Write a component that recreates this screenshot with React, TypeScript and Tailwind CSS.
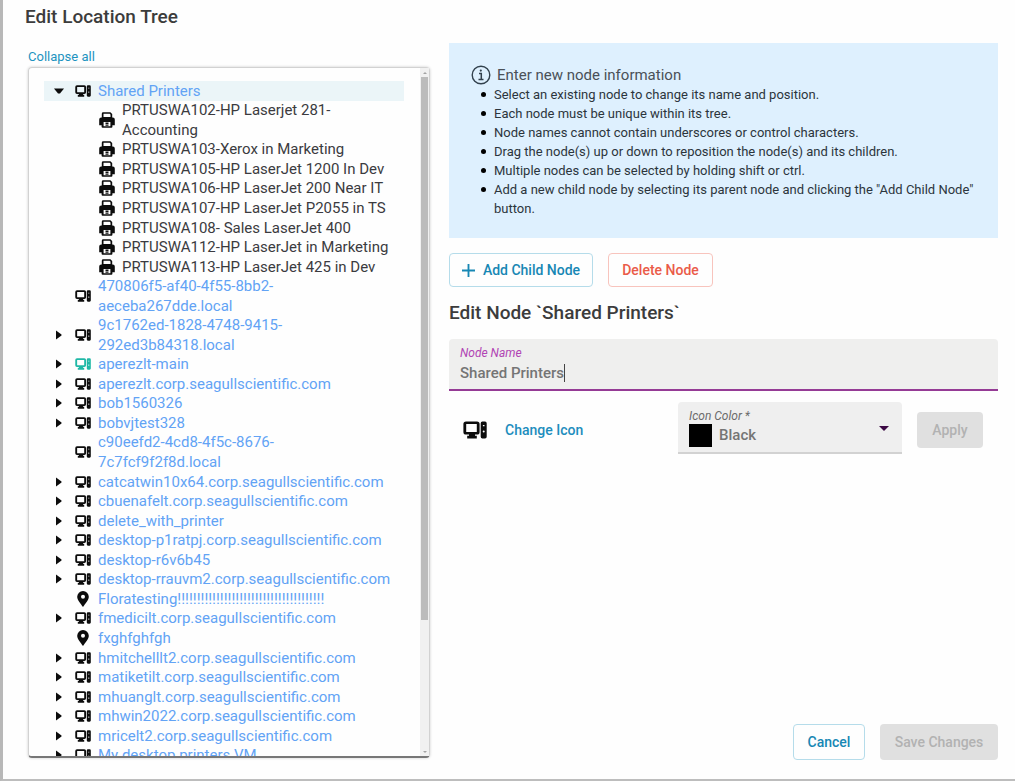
import { useState } from "react";

type IconKind = "computer" | "printer" | "pin";

interface TreeNode {
  name: string;
  icon: IconKind;
  level: 1 | 2;
  expanded?: boolean;
  tall?: boolean;
  teal?: boolean;
}

const host = (name: string, tall = false): TreeNode => ({ name, icon: "computer", level: 1, expanded: false, tall });
const leaf = (name: string, icon: IconKind, tall = false): TreeNode => ({ name, icon, level: 1, tall });
const printer = (name: string, tall = false): TreeNode => ({ name, icon: "printer", level: 2, tall });

const nodes: TreeNode[] = [
  { name: "Shared Printers", icon: "computer", level: 1, expanded: true },
  printer("PRTUSWA102-HP Laserjet 281-Accounting", true),
  printer("PRTUSWA103-Xerox in Marketing"),
  printer("PRTUSWA105-HP LaserJet 1200 In Dev"),
  printer("PRTUSWA106-HP LaserJet 200 Near IT"),
  printer("PRTUSWA107-HP LaserJet P2055 in TS"),
  printer("PRTUSWA108- Sales LaserJet 400"),
  printer("PRTUSWA112-HP LaserJet in Marketing"),
  printer("PRTUSWA113-HP LaserJet 425 in Dev"),
  leaf("470806f5-af40-4f55-8bb2-aeceba267dde.local", "computer", true),
  host("9c1762ed-1828-4748-9415-292ed3b84318.local", true),
  { ...host("aperezlt-main"), teal: true },
  host("aperezlt.corp.seagullscientific.com"),
  host("bob1560326"),
  host("bobvjtest328"),
  leaf("c90eefd2-4cd8-4f5c-8676-7c7fcf9f2f8d.local", "computer", true),
  host("catcatwin10x64.corp.seagullscientific.com"),
  host("cbuenafelt.corp.seagullscientific.com"),
  host("delete_with_printer"),
  host("desktop-p1ratpj.corp.seagullscientific.com"),
  host("desktop-r6v6b45"),
  host("desktop-rrauvm2.corp.seagullscientific.com"),
  leaf("Floratesting!!!!!!!!!!!!!!!!!!!!!!!!!!!!!!!!!!!!!!", "pin"),
  host("fmedicilt.corp.seagullscientific.com"),
  leaf("fxghfghfgh", "pin"),
  host("hmitchelllt2.corp.seagullscientific.com"),
  host("matiketilt.corp.seagullscientific.com"),
  host("mhuanglt.corp.seagullscientific.com"),
  host("mhwin2022.corp.seagullscientific.com"),
  host("mricelt2.corp.seagullscientific.com"),
  host("My desktop printers VM"),
];

const tips = [
  "Select an existing node to change its name and position.",
  "Each node must be unique within its tree.",
  "Node names cannot contain underscores or control characters.",
  "Drag the node(s) up or down to reposition the node(s) and its children.",
  "Multiple nodes can be selected by holding shift or ctrl.",
  'Add a new child node by selecting its parent node and clicking the "Add Child Node" button.',
];

function ComputerIcon({ className }: { className: string }) {
  return (
    <svg viewBox="0 0 24 18" className={className} fill="currentColor" aria-hidden="true">
      <path
        fillRule="evenodd"
        d="M3 .5h11a2.600 2.600 0 0 1 2.600 2.600v7.800A2.600 2.600 0 0 1 14 13.500h-2v1.300h1.800V17.500H4.200v-2.700H6V13.500H3A2.600 2.600 0 0 1 .4 10.900V3.100A2.600 2.600 0 0 1 3 .5Zm.2 2.500v8h10.600V3Z"
      />
      <path
        fillRule="evenodd"
        d="M19.400 .5h2.600A1.700 1.700 0 0 1 23.700 2.200v13.600A1.700 1.700 0 0 1 22 17.500h-2.600a1.700 1.700 0 0 1-1.700-1.700V2.200A1.700 1.700 0 0 1 19.400 .5Zm.5 3.500v1.300h1.600V4Zm.8 5.600a1 1 0 1 0 0 2 1 1 0 0 0 0-2Z"
      />
    </svg>
  );
}

function PrinterIcon({ className }: { className: string }) {
  return (
    <svg viewBox="0 0 16 16" className={className} fill="currentColor" aria-hidden="true">
      <path
        fillRule="evenodd"
        d="M4.200 .3h7.200L13.200 2V5.500h.6A2 2 0 0 1 15.800 7.500v5.700h-2.400v1.500a1 1 0 0 1-1 1H3.600a1 1 0 0 1-1-1V13.200H.2V7.500a2 2 0 0 1 2-2H2.800V1.700A1.400 1.400 0 0 1 4.200 .3Zm.3 1.500V5h7V2.600l-.8-.8ZM4.600 10v4.300h6.800V10Z"
      />
      <path d="M6.500 10.600h3v1.300h-3zM6.500 12.500h3v1.200h-3z" />
    </svg>
  );
}

function PinIcon({ className }: { className: string }) {
  return (
    <svg viewBox="0 0 12 16" className={className} fill="currentColor" aria-hidden="true">
      <path fillRule="evenodd" d="M6 0a5.800 5.800 0 0 1 5.800 5.800C11.800 9 8.500 12.500 6 16 3.500 12.500.2 9 .2 5.800A5.800 5.800 0 0 1 6 0Zm0 3.700a2 2 0 1 0 0 4 2 2 0 0 0 0-4Z" />
    </svg>
  );
}

function NodeIcon({ node }: { node: TreeNode }) {
  if (node.icon === "printer") return <PrinterIcon className="size-4" />;
  if (node.icon === "pin") return <PinIcon className="h-4 w-3" />;
  return <ComputerIcon className={node.teal ? "h-3 w-4 text-[#1fb8a6]" : "h-3 w-4"} />;
}

function Caret({ expanded }: { expanded: boolean }) {
  return (
    <svg viewBox="0 0 10 10" className="size-[10px]" fill="currentColor" aria-hidden="true">
      {expanded ? <path d="M0 2.500h10L6 7.500H4Z" /> : <path d="M2 .5L7.500 4.400v1.200L2 9.500Z" />}
    </svg>
  );
}

function TreeRow({ node, selected, onSelect }: { node: TreeNode; selected: boolean; onSelect: () => void }) {
  return (
    <li
      role="treeitem"
      aria-level={node.level}
      aria-expanded={node.expanded}
      aria-selected={selected}
      onClick={onSelect}
      className={`flex cursor-pointer items-center pr-[11px] text-[#0c0c0c] ${node.tall ? "row-span-2" : ""} ${selected ? "bg-[#ebf5f8]" : ""}`}
    >
      <span className={`flex shrink-0 items-center justify-center ${node.level === 2 ? "w-[54px]" : "w-[30px]"}`}>
        {node.expanded !== undefined && <Caret expanded={node.expanded} />}
      </span>
      <span className="flex w-[18px] shrink-0 justify-center">
        <NodeIcon node={node} />
      </span>
      <span className={`ml-[6px] min-w-0 text-[15px] leading-5 ${node.level === 2 ? "text-[#3b3b3f]" : "text-[#62a3f5]"}`}>
        {node.name}
      </span>
    </li>
  );
}

export default function App() {
  const [selected, setSelected] = useState(0);
  const [name, setName] = useState("Shared Printers");

  return (
    <main className="flex h-screen flex-col border-b-2 border-l-[3px] border-b-[#bdbdbd] border-l-[#b8b8b8] bg-[#fefefe] pr-[17px] pb-[21px] pl-[25px] font-[Roboto,sans-serif] text-[#3c3c3c]">
      <h1 className="-ml-[3px] pt-1 text-[19px] leading-[26px] font-medium">Edit Location Tree</h1>

      <div className="mt-[13px] flex min-h-0 flex-1 gap-[19px]">
        <section className="flex w-[402px] shrink-0 flex-col pt-1" aria-label="Location tree">
          <button type="button" className="self-start text-[13px] leading-5 text-[#1d93c0]">
            Collapse all
          </button>
          <div className="flex min-h-0 flex-1 rounded-[4px] border border-[#d2d2d2] border-b-2 border-b-[#777] shadow-[0_0_3px_#0003]">
            <div className="min-w-0 flex-1 overflow-y-auto pt-[13px] pr-4 pl-[15px] [scrollbar-width:none]">
              <ul role="tree" aria-label="Locations" className="grid h-[684px] grid-rows-[repeat(35,minmax(0,1fr))]">
                {nodes.map((node, i) => (
                  <TreeRow key={node.name} node={node} selected={i === selected} onSelect={() => setSelected(i)} />
                ))}
              </ul>
            </div>
            <div className="flex w-[9px] shrink-0 flex-col items-center bg-[#f1f1f1]" aria-hidden="true">
              <span className="flex h-[9px] items-center text-[#a3a3a3]">
                <svg viewBox="0 0 4 4" className="size-1" fill="currentColor"><path d="M0 3l2-2 2 2z" /></svg>
              </span>
              <span className="w-[7px] grow-[543] bg-[#bcbcbc]" />
              <span className="grow-[127]" />
              <span className="flex h-[9px] items-center text-[#a3a3a3]">
                <svg viewBox="0 0 4 4" className="size-1" fill="currentColor"><path d="M0 1l2 2 2-2z" /></svg>
              </span>
            </div>
          </div>
        </section>

        <section className="flex min-w-0 flex-1 flex-col" aria-label="Node details">
          <div className="bg-[#def0fe] px-[22px] pt-[22px] pb-5">
            <h2 className="flex items-center gap-[6px] text-[15px] leading-5 text-[#4a5158]">
              <svg viewBox="0 0 20 20" className="size-5" fill="none" stroke="#32414d" aria-hidden="true">
                <circle cx="10" cy="10" r="8.800" strokeWidth="1.400" />
                <circle cx="9.800" cy="5.600" r="1.100" fill="#32414d" stroke="none" />
                <path d="M8 8.500h2.300v5.800M7.500 14.400h5" strokeWidth="1.500" />
              </svg>
              Enter new node information
            </h2>
            <ul className="pl-[10px] text-[13px] leading-[19px] text-[#2c353c]">
              {tips.map((tip) => (
                <li key={tip} className="flex gap-2">
                  <span className="mt-[7px] size-[5px] shrink-0 rounded-full bg-black" aria-hidden="true" />
                  <span>{tip}</span>
                </li>
              ))}
            </ul>
          </div>

          <div className="mt-[15px] flex gap-[15px]">
            <button type="button" className="flex h-[34px] w-36 items-center justify-center gap-2 rounded-[4px] border border-[#b5dcea] text-[14px] font-medium text-[#1787b4]">
              <svg viewBox="0 0 14 14" className="size-[13px]" stroke="currentColor" strokeWidth="2" aria-hidden="true">
                <path d="M7 0v14M0 7h14" />
              </svg>
              Add Child Node
            </button>
            <button type="button" className="h-[34px] w-[105px] rounded-[4px] border border-[#f8c4bd] text-[14px] font-medium text-[#ea5b49]">
              Delete Node
            </button>
          </div>

          <h2 className="mt-[13px] text-[19px] leading-[26px] font-medium">Edit Node `Shared Printers`</h2>

          <div className="mt-[13px] flex flex-col rounded-t-[4px] border-b-2 border-[#953b95] bg-[#efefee] px-[11px] pt-[6px] pb-1">
            <label htmlFor="node-name" className="text-[12px] leading-4 text-[#b144b4] italic">
              Node Name
            </label>
            <span className="flex h-6 items-center">
              <input
                id="node-name"
                value={name}
                onChange={(e) => setName(e.target.value)}
                className="field-sizing-content max-w-full bg-transparent text-[15px] font-medium text-[#757575] outline-none"
              />
              <span className="h-[18px] w-px bg-[#444]" aria-hidden="true" />
            </span>
          </div>

          <div className="mt-[11px] flex items-center">
            <ComputerIcon className="mt-1 ml-[14px] h-[18px] w-6 shrink-0 text-[#0c0c0c]" />
            <button type="button" className="mt-1 ml-[18px] text-[14px] font-medium text-[#1d8dbd]">
              Change Icon
            </button>
            <div className="relative ml-auto h-[52px] w-[224px] rounded-t-[4px] border-b-2 border-[#d2d2d2] bg-[#efefef]">
              <label htmlFor="icon-color" className="absolute top-[6px] left-[11px] text-[12px] leading-4 text-[#6b6b6b] italic">
                Icon Color *
              </label>
              <select id="icon-color" defaultValue="Black" className="size-full appearance-none bg-transparent pt-4 pl-[41px] text-[15px] font-medium text-[#757575] outline-none">
                <option>Black</option>
                <option>Teal</option>
              </select>
              <span className="pointer-events-none absolute top-[22px] left-[11px] size-[23px] bg-black" aria-hidden="true" />
              <svg viewBox="0 0 10 5" className="pointer-events-none absolute top-6 right-[13px] h-[5px] w-[10px] fill-[#3d0a45]" aria-hidden="true">
                <path d="M0 0h10L5 5z" />
              </svg>
            </div>
            <button type="button" disabled className="mx-[15px] mt-1 h-9 w-[66px] rounded-[4px] bg-[#e0e0e0] text-[14px] font-medium text-[#b2b2b2]">
              Apply
            </button>
          </div>

          <div className="mt-auto -mb-[2px] flex justify-end gap-[15px]">
            <button type="button" className="h-9 w-[72px] rounded-[4px] border border-[#b5dcea] text-[14px] font-medium text-[#1787b4]">
              Cancel
            </button>
            <button type="button" disabled className="h-9 w-[118px] rounded-[4px] bg-[#e0e0e0] text-[14px] font-medium text-[#b2b2b2]">
              Save Changes
            </button>
          </div>
        </section>
      </div>
    </main>
  );
}
